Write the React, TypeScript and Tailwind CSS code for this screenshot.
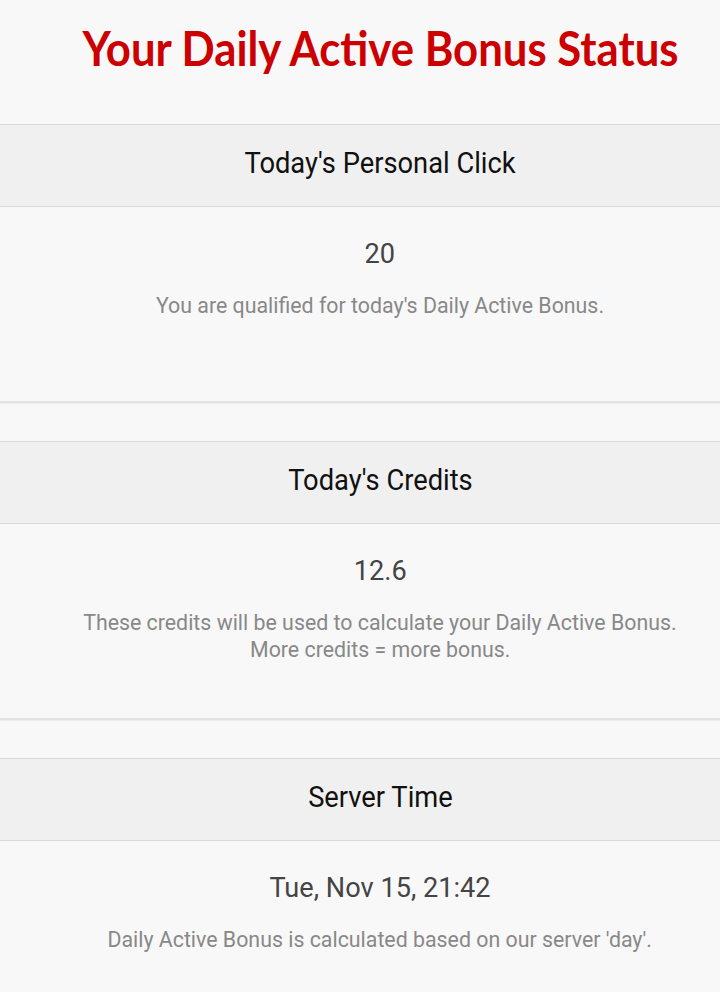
import React from "react";

type StatusCardProps = {
  title: string;
  value: string;
  lines: string[];
};

const StatusCard = ({ title, value, lines }: StatusCardProps) => {
  return (
    <section className="mb-[38px] border-b-2 border-[#e2e2e2] shadow-[0_1px_1px_rgba(0,0,0,0.04)]">
      <div className="h-[83px] border-y border-[#dadada] bg-[#f0f0f0] pl-10 pb-[5px] flex items-center justify-center">
        <h2 className="inline-block origin-center scale-x-[0.91] whitespace-nowrap text-[30px] leading-[34px] text-[#111]">
          {title}
        </h2>
      </div>
      <div className="h-[194px] bg-[#f8f8f8] pl-10 pt-[30px] flex flex-col items-center">
        <div className="scale-x-[0.97] whitespace-nowrap text-[28px] leading-[34px] text-[#444]">
          {value}
        </div>
        <div className="mt-[21px] flex flex-col items-center">
          {lines.map((line) => (
            <p
              key={line}
              className="scale-x-[0.97] whitespace-nowrap text-[22px] leading-[27px] text-[#888]"
            >
              {line}
            </p>
          ))}
        </div>
      </div>
    </section>
  );
};

const App = () => {
  const cards: StatusCardProps[] = [
    {
      title: "Today's Personal Click",
      value: "20",
      lines: ["You are qualified for today's Daily Active Bonus."],
    },
    {
      title: "Today's Credits",
      value: "12.6",
      lines: [
        "These credits will be used to calculate your Daily Active Bonus.",
        "More credits = more bonus.",
      ],
    },
    {
      title: "Server Time",
      value: "Tue, Nov 15, 21:42",
      lines: ["Daily Active Bonus is calculated based on our server 'day'."],
    },
  ];

  return (
    <div className="h-[992px] w-[720px] overflow-hidden bg-[#f8f8f8] font-['Roboto',sans-serif]">
      <header className="h-[124px] pl-10 flex items-start justify-center pt-[18px]">
        <h1 className="scale-x-[0.91] whitespace-nowrap font-['Lato',sans-serif] text-[48px] font-bold leading-[60px] text-[#cc0000]">
          Your Daily Active Bonus Status
        </h1>
      </header>
      {cards.map((card) => (
        <StatusCard key={card.title} {...card} />
      ))}
    </div>
  );
};

export default App;
